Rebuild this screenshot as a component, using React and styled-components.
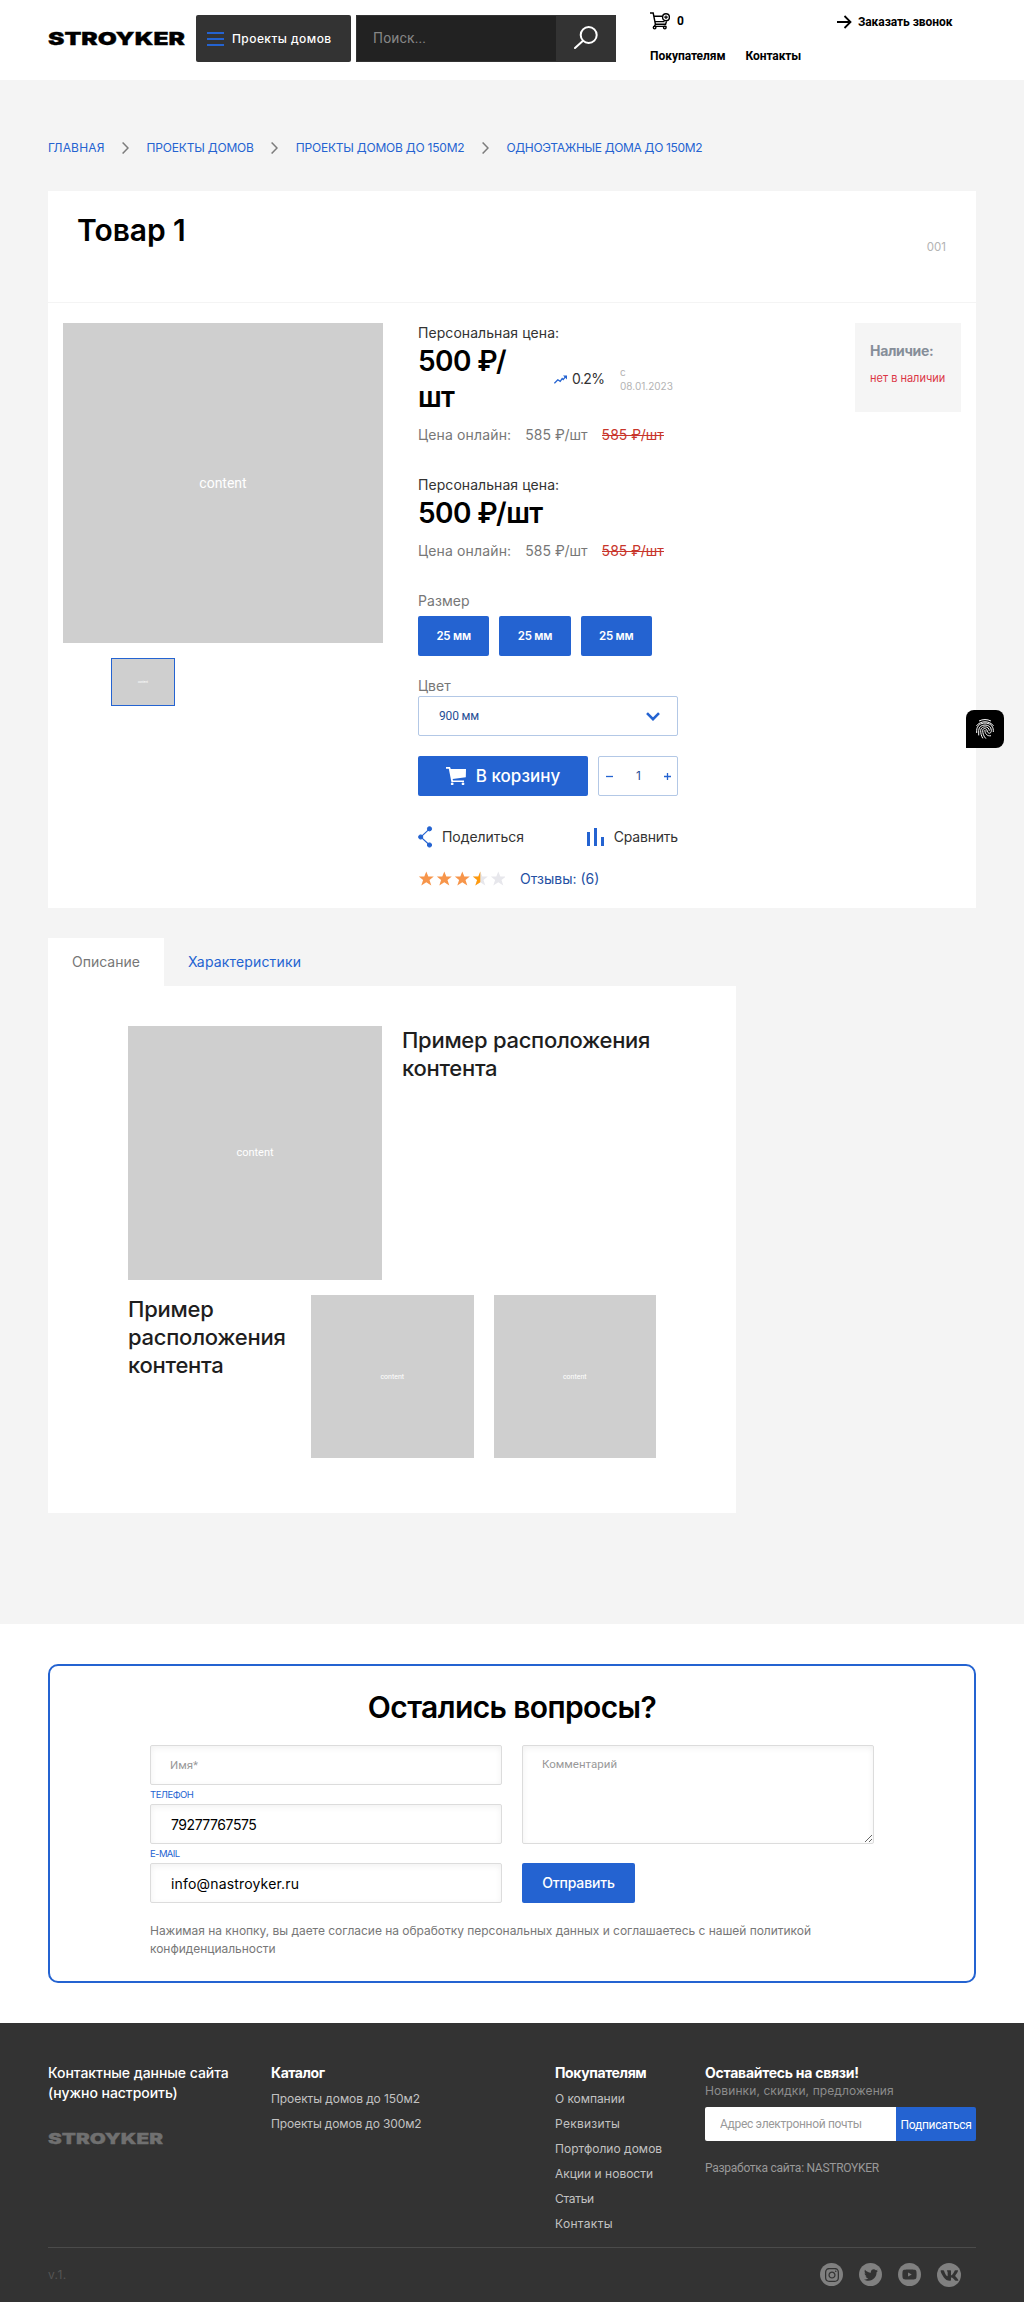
import React from 'react';
import styled, { createGlobalStyle } from 'styled-components';
import { FaInstagram, FaTwitter, FaYoutube, FaVk } from 'react-icons/fa';

const blue = '#2463d1';
const dark = '#333333';

const GlobalStyle = createGlobalStyle`
  * { box-sizing: border-box; }
  body { margin: 0; background: #fff; font-family: Inter, "Noto Sans", sans-serif; color: ${dark}; }
  h1, h2, h3, p, ul { margin: 0; padding: 0; font-weight: inherit; }
  ul { list-style: none; }
  a { color: inherit; text-decoration: none; }
  button, input, textarea { font-family: inherit; margin: 0; }
`;

const Text = styled.span`
  display: block;
  white-space: ${(p) => (p.$wrap ? 'normal' : 'nowrap')};
  font-family: ${(p) => (p.$roboto ? 'Roboto' : 'Inter')}, "Noto Sans", sans-serif;
  font-size: ${(p) => p.$size || 14}px;
  font-weight: ${(p) => p.$weight || 400};
  line-height: ${(p) => p.$line || 20}px;
  letter-spacing: ${(p) => p.$spacing || 0}px;
  color: ${(p) => p.$color || 'inherit'};
`;

/* ---------- header ---------- */

const Header = styled.header`
  height: 80px;
  padding: 15px 48px 0;
  display: flex;
  align-items: flex-start;
`;
const LogoSvg = styled.svg`
  display: block;
  overflow: visible;
  flex: none;
  margin: ${(p) => p.$margin || 0};
  text {
    font-family: Inter, sans-serif;
    font-weight: 900;
  }
`;
const CatalogButton = styled.button`
  width: 155px;
  height: 47px;
  margin-left: 11px;
  padding: 0 0 0 11px;
  border: 0;
  border-radius: 2px;
  background: ${dark};
  color: #fff;
  display: flex;
  align-items: center;
  gap: 8px;
`;
const Burger = styled.span`
  width: 17px;
  height: 14px;
  border-top: 2px solid ${blue};
  border-bottom: 2px solid ${blue};
  display: flex;
  align-items: center;
  &::before {
    content: '';
    width: 100%;
    height: 2px;
    background: ${blue};
  }
`;
const Search = styled.form`
  width: 260px;
  height: 47px;
  margin-left: 5px;
  border: 1px solid ${dark};
  background: ${dark};
  display: flex;
`;
const SearchInput = styled.input`
  width: 199px;
  border: 0;
  padding: 0 16px 1px;
  background: #222;
  font: 400 14px Roboto, sans-serif;
  letter-spacing: 0.14px;
  &::placeholder { color: #868686; opacity: 1; }
`;
const SearchButton = styled.button`
  flex: 1;
  border: 0;
  padding: 0 0 2px;
  background: transparent;
  display: flex;
  align-items: center;
  justify-content: center;
`;
const HeaderInfo = styled.div`
  flex: 1;
  margin-left: 34px;
  margin-top: -4px;
  color: #000;
`;
const HeaderRow = styled.div`
  display: flex;
  align-items: center;
  height: 20px;
  margin-bottom: 15px;
  gap: ${(p) => p.$gap || 0}px;
`;
const CartLink = styled.a`
  display: flex;
  align-items: center;
  gap: 7px;
`;
const CallLink = styled.a`
  display: flex;
  align-items: center;
  gap: 6px;
  margin-left: 153px;
  padding-top: 2px;
`;

/* ---------- page ---------- */

const Main = styled.main`
  height: 1544px;
  background: #f4f4f4;
  padding: 58px 48px 0;
`;
const Crumbs = styled.nav`
  height: 20px;
  display: flex;
  align-items: center;
  gap: 17.5px;
  color: ${blue};
`;
const Card = styled.section`
  height: 717px;
  margin-top: 33px;
  background: #fff;
`;
const CardHead = styled.div`
  height: 112px;
  padding: 20px 30px 0 29px;
  border-bottom: 1px solid #f4f4f4;
  display: flex;
  justify-content: space-between;
`;
const CardBody = styled.div`
  padding: 20px 15px;
  display: flex;
  align-items: flex-start;
`;
const Gallery = styled.div`
  width: 320px;
`;
const Placeholder = styled.div`
  width: ${(p) => p.$w}px;
  height: ${(p) => p.$h}px;
  flex: none;
  background: #cfcfcf;
  color: #fff;
  display: flex;
  align-items: center;
  justify-content: center;
`;
const Thumb = styled(Placeholder)`
  margin: 15px 0 0 48px;
  border: 1px solid ${blue};
`;
const Info = styled.div`
  width: 260px;
  margin-left: 35px;
`;
const PriceRow = styled.div`
  display: flex;
  align-items: center;
  height: ${(p) => p.$h}px;
`;
const PriceValue = styled.div`
  width: ${(p) => p.$w}px;
`;
const Trend = styled.div`
  display: flex;
  align-items: center;
  gap: 5px;
  width: 66px;
`;
const OnlineRow = styled.div`
  display: flex;
  gap: 14px;
  margin: 10px 0 30px;
  color: #777;
  s { color: #c8352b; text-decoration: none; background: linear-gradient(#c8352b, #c8352b) 0 10px / 100% 1px no-repeat; }
`;
const Sizes = styled.div`
  display: flex;
  gap: 10px;
  margin: 5px 0 20px;
`;
const Button = styled.button`
  width: ${(p) => p.$w}px;
  height: 40px;
  border: 0;
  border-radius: 2px;
  background: ${blue};
  color: #fff;
  display: flex;
  align-items: center;
  justify-content: center;
  gap: 10px;
  padding: 0;
`;
const Select = styled.div`
  height: 40px;
  border: 1px solid #b3c8e6;
  border-radius: 2px;
  padding: 0 17px 0 20px;
  color: #274f96;
  display: flex;
  align-items: center;
  justify-content: space-between;
`;
const BuyRow = styled.div`
  display: flex;
  justify-content: space-between;
  margin-top: 20px;
`;
const Counter = styled.div`
  width: 80px;
  height: 40px;
  border: 1px solid #b3c8e6;
  border-radius: 2px;
  padding: 0 6px 0 7px;
  display: flex;
  align-items: center;
  justify-content: space-between;
  color: #274f96;
`;
const ActionRow = styled.div`
  height: 22px;
  margin-top: 30px;
  display: flex;
  align-items: center;
  justify-content: space-between;
`;
const Action = styled.a`
  display: flex;
  align-items: center;
  gap: ${(p) => p.$gap}px;
`;
const RatingRow = styled.div`
  margin-top: 20px;
  height: 21px;
  display: flex;
  align-items: center;
  gap: 15px;
`;
const Stock = styled.aside`
  width: 106px;
  height: 89px;
  margin-left: auto;
  padding: 18px 0 0 15px;
  background: #f5f5f5;
`;

const Tabs = styled.div`
  display: flex;
  height: 48px;
  margin-top: 30px;
`;
const Tab = styled.a`
  padding: 14px 24px 0;
  background: ${(p) => (p.$active ? '#fff' : 'transparent')};
  color: ${(p) => (p.$active ? '#777' : blue)};
`;
const Panel = styled.section`
  width: 688px;
  height: 527px;
  padding: 40px 80px 0;
  background: #fff;
  color: #1e1e1e;
`;
const PanelRow = styled.div`
  display: flex;
  justify-content: flex-start;
  gap: 20px;
  margin-bottom: 15px;
`;
const PanelCell = styled.div`
  width: ${(p) => p.$w}px;
  flex: none;
`;

const FloatingButton = styled.button`
  position: fixed;
  left: 966px;
  top: 710px;
  width: 38px;
  height: 38px;
  border: 0;
  border-radius: 8px 8px 8px 0;
  background: #000;
  color: #fff;
  display: flex;
  align-items: center;
  justify-content: center;
  padding: 0;
`;

/* ---------- feedback form ---------- */

const FormSection = styled.section`
  padding: 40px 48px;
  height: 399px;
`;
const FormBox = styled.form`
  height: 319px;
  border: 2px solid ${blue};
  border-radius: 10px;
  padding: 22px 100px 0;
`;
const FormTitle = styled.h2`
  display: flex;
  justify-content: center;
  color: #000;
  margin-bottom: 19px;
`;
const FormGrid = styled.div`
  display: grid;
  grid-template-columns: 352px 352px;
  column-gap: 20px;
`;
const fieldStyle = `
  display: block;
  width: 352px;
  border: 1px solid #dcdcdc;
  border-radius: 2px;
  box-shadow: inset 0 2px 6px rgba(0, 0, 0, 0.06);
  background: #fff;
  outline: none;
  color: #000;
  &::placeholder {
    font: 400 11.5px/18px Roboto, sans-serif;
    letter-spacing: 0;
    color: #999;
    opacity: 1;
  }
`;
const Field = styled.input`
  ${fieldStyle}
  height: 40px;
  padding: 0 19px ${(p) => p.$bottom || 0}px;
  padding-left: ${(p) => p.$pad || 19}px;
  font-size: 14px;
  letter-spacing: ${(p) => p.$spacing || 0}px;
`;
const Area = styled.textarea`
  ${fieldStyle}
  height: 99px;
  padding: 9px 19px;
  font: 400 11.5px/18px Roboto, sans-serif;
`;
const Submit = styled(Button)`
  margin-top: 19px;
`;
const Note = styled.p`
  margin-top: 19px;
  color: #777;
`;

/* ---------- footer ---------- */

const Footer = styled.footer`
  height: 279px;
  background: ${dark};
  padding: 40px 48px 0;
`;
const FooterTop = styled.div`
  height: 185px;
  border-bottom: 1px solid #4b4b4b;
  display: grid;
  grid-template-columns: 223px 284px 150px 271px;
  color: #c2c2c2;
`;
const FooterCol = styled.div`
  min-width: 0;
`;
const FooterLinks = styled.ul`
  margin-top: 4px;
  li { height: 25px; }
`;
const Subscribe = styled.form`
  display: flex;
  width: 271px;
  height: 34px;
  margin: 9px 0 17px;
`;
const SubscribeInput = styled.input`
  width: 191px;
  border: 0;
  border-radius: 2px 0 0 2px;
  padding: 0 15px;
  font: 400 12px Roboto, sans-serif;
  letter-spacing: -0.31px;
  &::placeholder { color: #999; opacity: 1; }
`;
const SubscribeButton = styled.button`
  width: 80px;
  border: 0;
  border-radius: 0 2px 2px 0;
  padding: 2px 0 0;
  background: ${blue};
  color: #fff;
  display: flex;
  align-items: center;
  justify-content: center;
`;
const FooterBottom = styled.div`
  display: flex;
  justify-content: space-between;
  align-items: center;
  height: 54px;
  padding-right: 15px;
`;
const Socials = styled.div`
  display: flex;
  gap: 16px;
`;
const Social = styled.a`
  width: ${(p) => p.$d || 23}px;
  height: ${(p) => p.$d || 23}px;
  border-radius: 50%;
  background: #808080;
  color: ${dark};
  display: flex;
  align-items: center;
  justify-content: center;
`;

/* ---------- drawings ---------- */

const Logo = ({ width, cap, color, margin }) => (
  <LogoSvg width={width} height={cap} $margin={margin}>
    <text x="0" y={cap} fontSize={cap / 0.727} textLength={width} lengthAdjust="spacingAndGlyphs" fill={color} stroke={color} strokeWidth="0.3">
      STROYKER
    </text>
  </LogoSvg>
);

const SearchIcon = () => (
  <svg width="24" height="24" viewBox="0 0 24 24" fill="none" stroke="#fff" strokeWidth="2">
    <circle cx="14.7" cy="9" r="8" />
    <path d="M9 14.8 1 22" strokeLinecap="round" />
  </svg>
);

const CartPlusIcon = () => (
  <svg width="20" height="18" viewBox="0 0 20 18" fill="none" stroke="#000" strokeWidth="1.4">
    <path d="M0 1h3.2l2.2 11.2h10.2l.9-3M3.8 4.2h8.2M4.6 9.6h10M5.4 12.2l-1 2.2h12" />
    <circle cx="16" cy="5.2" r="3.4" />
    <path d="M16 3.4v3.6M14.2 5.2h3.6" strokeWidth="1.2" />
    <circle cx="4.6" cy="15.6" r="1.3" />
    <circle cx="14.8" cy="15.6" r="1.3" />
  </svg>
);

const ArrowIcon = () => (
  <svg width="15" height="14" viewBox="0 0 15 14" fill="none" stroke="#000" strokeWidth="1.8">
    <path d="M0 7h13.5M7.5 1l6 6-6 6" />
  </svg>
);

const Chevron = () => (
  <svg width="7" height="12" viewBox="0 0 7 12" fill="none" stroke="#7c7c7c" strokeWidth="1.5">
    <path d="M.6.5 6 6 .6 11.5" />
  </svg>
);

const TrendIcon = () => (
  <svg width="13" height="9" viewBox="0 0 13 9" fill="none" stroke={blue} strokeWidth="1.3">
    <path d="M.4 8.3 3.8 4.8l2.4 1.6L8.2 3.6l1 1L12 1.2" />
    <path d="M9 .4h4v4z" fill={blue} stroke="none" />
  </svg>
);

const DownIcon = () => (
  <svg width="14" height="9" viewBox="0 0 14 9" fill="none" stroke={blue} strokeWidth="2.6">
    <path d="M1 1.2 7 7.2l6-6" />
  </svg>
);

const CartIcon = () => (
  <svg width="20" height="18" viewBox="0 0 20 18" fill="#fff">
    <path d="M0 0h4l.8 2H20l-.2 8.2L6.6 12l.5 1.4H18V15H5.4L2.8 1.8H0z" />
    <circle cx="6.2" cy="16.8" r="1.4" />
    <circle cx="17" cy="16.8" r="1.4" />
  </svg>
);

const MinusIcon = () => (
  <svg width="7" height="7" stroke={blue} strokeWidth="1.3"><path d="M0 3.5h7" /></svg>
);
const PlusIcon = () => (
  <svg width="7" height="7" stroke={blue} strokeWidth="1.3"><path d="M0 3.5h7M3.5 0v7" /></svg>
);

const ShareIcon = () => (
  <svg width="15" height="22" viewBox="0 0 15 22" fill={blue} stroke={blue}>
    <path d="M11.5 2.8 2.8 11l8.7 8" fill="none" strokeWidth="1.1" />
    <circle cx="11.5" cy="2.8" r="2.1" />
    <circle cx="2.7" cy="11" r="2.1" />
    <circle cx="11.5" cy="19" r="2.1" />
  </svg>
);

const CompareIcon = () => (
  <svg width="17" height="18" viewBox="0 0 17 18" fill={blue}>
    <path d="M0 4h3v14H0zM7 0h3v18H7zM14 9h3v9h-3z" />
  </svg>
);

const FingerprintIcon = () => (
  <svg width="18" height="20" viewBox="0 0 18 20" fill="none" stroke="#fff" strokeWidth="1" strokeLinecap="round">
    <path d="M3.4 1.8C6.600 .1 11.400 .1 14.600 1.8" />
    <path d="M.7 6.600C4.200 1.400 13.800 1.400 17.300 6.600" />
    <path d="M.7 13.600V11.400C.7 1.600 17.300 1.600 17.300 11.400V12.600" />
    <path d="M2.700 16V11.400C2.700 4.200 15.300 4.200 15.300 11.400C15.300 15.400 11.600 14.800 11.200 12.200" />
    <path d="M6.600 19C5.300 17 4.700 14.400 4.700 11.400C4.700 6.600 13.300 6.600 13.300 11.400" />
    <path d="M9.600 19.300C7.700 17.500 6.700 14.400 6.700 11.400C6.700 8.800 11.200 8.800 11.200 12.200" />
    <path d="M8.900 11.400C8.900 14.600 11 17.400 14.600 16.800" />
  </svg>
);

const starPath = 'M7.5 0l2 5H15l-4.3 3.6 1.8 5.4-5-3.2L2.5 14l1.8-5.4L0 5h5.5z';
const Stars = () => (
  <svg width="87" height="15" viewBox="0 0 87 15">
    {[0, 1, 2, 3, 4].map((i) => (
      <path key={i} d={starPath} transform={`translate(${0.8 + i * 18} 0.5)`} fill={i < 3 ? '#f7954a' : '#e7e7ec'} />
    ))}
    <path d="M7.5 0v10.8L2.5 14l1.8-5.4L0 5h5.5z" transform="translate(54.8 0.5)" fill="#ff9a0d" />
  </svg>
);

/* ---------- data ---------- */

const crumbs = [
  ['ГЛАВНАЯ', 0.18],
  ['ПРОЕКТЫ ДОМОВ', -0.19],
  ['ПРОЕКТЫ ДОМОВ ДО 150М2', -0.21],
  ['ОДНОЭТАЖНЫЕ ДОМА ДО 150М2', -0.32],
];
const catalogLinks = [
  ['Проекты домов до 150м2', -0.08],
  ['Проекты домов до 300м2', -0.14],
];
const buyerLinks = [
  ['О компании', -0.06],
  ['Реквизиты', 0.28],
  ['Портфолио домов', 0.02],
  ['Акции и новости', 0.01],
  ['Статьи', -0.31],
  ['Контакты', 0.32],
];

const OnlinePrice = () => (
  <OnlineRow>
    <Text $spacing={0.15}>Цена онлайн:</Text>
    <Text $spacing={0.04}>585 ₽/шт</Text>
    <Text as="s" $spacing={0.04}>585 ₽/шт</Text>
  </OnlineRow>
);

const LinkList = ({ items }) => (
  <FooterLinks>
    {items.map(([label, spacing]) => (
      <li key={label}>
        <Text as="a" href="#" $size={12} $line={24} $spacing={spacing}>{label}</Text>
      </li>
    ))}
  </FooterLinks>
);

export default function App() {
  return (
    <>
      <GlobalStyle />
      <Header>
        <Logo width={137} cap={12.7} color="#000" margin="17px 0 0" />
        <CatalogButton type="button">
          <Burger />
          <Text $size={12} $weight={500} $spacing={0.43}>Проекты домов</Text>
        </CatalogButton>
        <Search>
          <SearchInput placeholder="Поиск..." />
          <SearchButton type="button"><SearchIcon /></SearchButton>
        </Search>
        <HeaderInfo>
          <HeaderRow>
            <CartLink href="#">
              <CartPlusIcon />
              <Text $roboto $size={12} $weight={700}>0</Text>
            </CartLink>
            <CallLink href="#">
              <ArrowIcon />
              <Text $roboto $size={12} $weight={700} $spacing={-0.06}>Заказать звонок</Text>
            </CallLink>
          </HeaderRow>
          <HeaderRow $gap={20}>
            <Text as="a" href="#" $roboto $size={12} $weight={700} $spacing={-0.04}>Покупателям</Text>
            <Text as="a" href="#" $roboto $size={12} $weight={700} $spacing={-0.11}>Контакты</Text>
          </HeaderRow>
        </HeaderInfo>
      </Header>

      <Main>
        <Crumbs>
          {crumbs.map(([label, spacing], i) => (
            <React.Fragment key={label}>
              {i > 0 && <Chevron />}
              <Text as="a" href="#" $size={12} $spacing={spacing}>{label}</Text>
            </React.Fragment>
          ))}
        </Crumbs>

        <Card>
          <CardHead>
            <Text as="h1" $size={30} $weight={570} $line={38} $spacing={-0.05} $color="#000">Товар 1</Text>
            <Text $size={11.5} $line={72} $color="#b3b3b3">001</Text>
          </CardHead>
          <CardBody>
            <Gallery>
              <Placeholder $w={320} $h={320}><Text $roboto $size={14}>content</Text></Placeholder>
              <Thumb $w={64} $h={48}><Text $roboto $size={3} $line={6}>content</Text></Thumb>
            </Gallery>
            <Info>
              <Text $spacing={0.06}>Персональная цена:</Text>
              <PriceRow $h={72}>
                <PriceValue $w={136}>
                  <Text $wrap $size={28} $weight={600} $line={36} $spacing={-0.6} $color="#000">500 ₽/<br />шт</Text>
                </PriceValue>
                <Trend>
                  <TrendIcon />
                  <Text $spacing={-0.6}>0.2%</Text>
                </Trend>
                <Text $size={10} $line={14} $color="#b3b3b3">с<br />08.01.2023</Text>
              </PriceRow>
              <OnlinePrice />
              <Text $spacing={0.06}>Персональная цена:</Text>
              <PriceRow $h={36}>
                <Text $size={28} $weight={600} $line={36} $spacing={-0.56} $color="#000">500 ₽/шт</Text>
              </PriceRow>
              <OnlinePrice />
              <Text $spacing={0.07} $color="#777">Размер</Text>
              <Sizes>
                {[0, 1, 2].map((i) => (
                  <Button key={i} type="button" $w={71.3}>
                    <Text $size={11.5} $weight={600} $spacing={-0.25}>25 мм</Text>
                  </Button>
                ))}
              </Sizes>
              <Text $color="#777">Цвет</Text>
              <Select>
                <Text $roboto $size={12} $spacing={-0.15}>900 мм</Text>
                <DownIcon />
              </Select>
              <BuyRow>
                <Button type="button" $w={170}>
                  <CartIcon />
                  <Text $size={17} $weight={500}>В корзину</Text>
                </Button>
                <Counter>
                  <MinusIcon />
                  <Text $size={12}>1</Text>
                  <PlusIcon />
                </Counter>
              </BuyRow>
              <ActionRow>
                <Action href="#" $gap={9}><ShareIcon /><Text $spacing={-0.04}>Поделиться</Text></Action>
                <Action href="#" $gap={10}><CompareIcon /><Text $spacing={-0.19}>Сравнить</Text></Action>
              </ActionRow>
              <RatingRow>
                <Stars />
                <Text as="a" href="#" $color="#2450a3">Отзывы: (6)</Text>
              </RatingRow>
            </Info>
            <Stock>
              <Text $weight={700} $spacing={-0.32} $color="#868e99">Наличие:</Text>
              <Text $size={11} $line={35} $color="#dc3545">нет в наличии</Text>
            </Stock>
          </CardBody>
        </Card>

        <Tabs>
          <Tab $active href="#"><Text>Описание</Text></Tab>
          <Tab href="#"><Text $spacing={0.16}>Характеристики</Text></Tab>
        </Tabs>
        <Panel>
          <PanelRow>
            <Placeholder $w={254} $h={254}><Text $roboto $size={11}>content</Text></Placeholder>
            <PanelCell $w={254}>
              <Text as="h2" $wrap $size={22} $weight={550} $line={28} $spacing={-0.28}>Пример расположения контента</Text>
            </PanelCell>
          </PanelRow>
          <PanelRow>
            <PanelCell $w={163}>
              <Text as="h2" $wrap $size={22} $weight={550} $line={28} $spacing={-0.25}>Пример расположения контента</Text>
            </PanelCell>
            <Placeholder $w={162.5} $h={163}><Text $roboto $size={7}>content</Text></Placeholder>
            <Placeholder $w={162.5} $h={163}><Text $roboto $size={7}>content</Text></Placeholder>
          </PanelRow>
        </Panel>
      </Main>

      <FormSection>
        <FormBox>
          <FormTitle>
            <Text $size={30} $weight={570} $line={38} $spacing={-0.62}>Остались вопросы?</Text>
          </FormTitle>
          <FormGrid>
            <div>
              <Field placeholder="Имя*" $bottom={4} />
              <Text $size={9.5} $line={19} $spacing={-0.5} $color={blue}>ТЕЛЕФОН</Text>
              <Field $pad={20} $spacing={-0.46} defaultValue="79277767575" />
              <Text $size={9.5} $line={19} $spacing={-0.6} $color={blue}>E-MAIL</Text>
              <Field $pad={20} $spacing={0.17} defaultValue="info@nastroyker.ru" />
            </div>
            <div>
              <Area placeholder="Комментарий" />
              <Submit type="button" $w={113}><Text $weight={500} $spacing={-0.16}>Отправить</Text></Submit>
            </div>
          </FormGrid>
          <Note>
            <Text $wrap $size={12} $line={18} $spacing={-0.03}>
              Нажимая на кнопку, вы даете согласие на обработку персональных данных и соглашаетесь с нашей политикой конфиденциальности
            </Text>
          </Note>
        </FormBox>
      </FormSection>

      <Footer>
        <FooterTop>
          <FooterCol>
            <Text $weight={500} $spacing={-0.05} $color="#fff">Контактные данные сайта<br />(нужно настроить)</Text>
            <Logo width={115} cap={10.7} color="#707070" margin="29.5px 0 0" />
          </FooterCol>
          <FooterCol>
            <Text as="h3" $weight={700} $spacing={-0.44} $color="#fff">Каталог</Text>
            <LinkList items={catalogLinks} />
          </FooterCol>
          <FooterCol>
            <Text as="h3" $weight={700} $spacing={-0.38} $color="#fff">Покупателям</Text>
            <LinkList items={buyerLinks} />
          </FooterCol>
          <FooterCol>
            <Text as="h3" $weight={700} $spacing={-0.26} $color="#fff">Оставайтесь на связи!</Text>
            <Text $size={12} $line={15} $spacing={0.1} $color="#8c8c8c">Новинки, скидки, предложения</Text>
            <Subscribe>
              <SubscribeInput placeholder="Адрес электронной почты" />
              <SubscribeButton type="button">
                <Text $roboto $size={12} $spacing={-0.27}>Подписаться</Text>
              </SubscribeButton>
            </Subscribe>
            <Text $roboto $size={12} $spacing={-0.27} $color="#999">Разработка сайта: NASTROYKER</Text>
          </FooterCol>
        </FooterTop>
        <FooterBottom>
          <Text $size={12} $spacing={0.4} $color="#555">v.1.</Text>
          <Socials>
            <Social href="#"><FaInstagram size={16} /></Social>
            <Social href="#"><FaTwitter size={14} /></Social>
            <Social href="#"><FaYoutube size={15} /></Social>
            <Social href="#" $d={24}><FaVk size={19} /></Social>
          </Socials>
        </FooterBottom>
      </Footer>

      <FloatingButton type="button"><FingerprintIcon /></FloatingButton>
    </>
  );
}
